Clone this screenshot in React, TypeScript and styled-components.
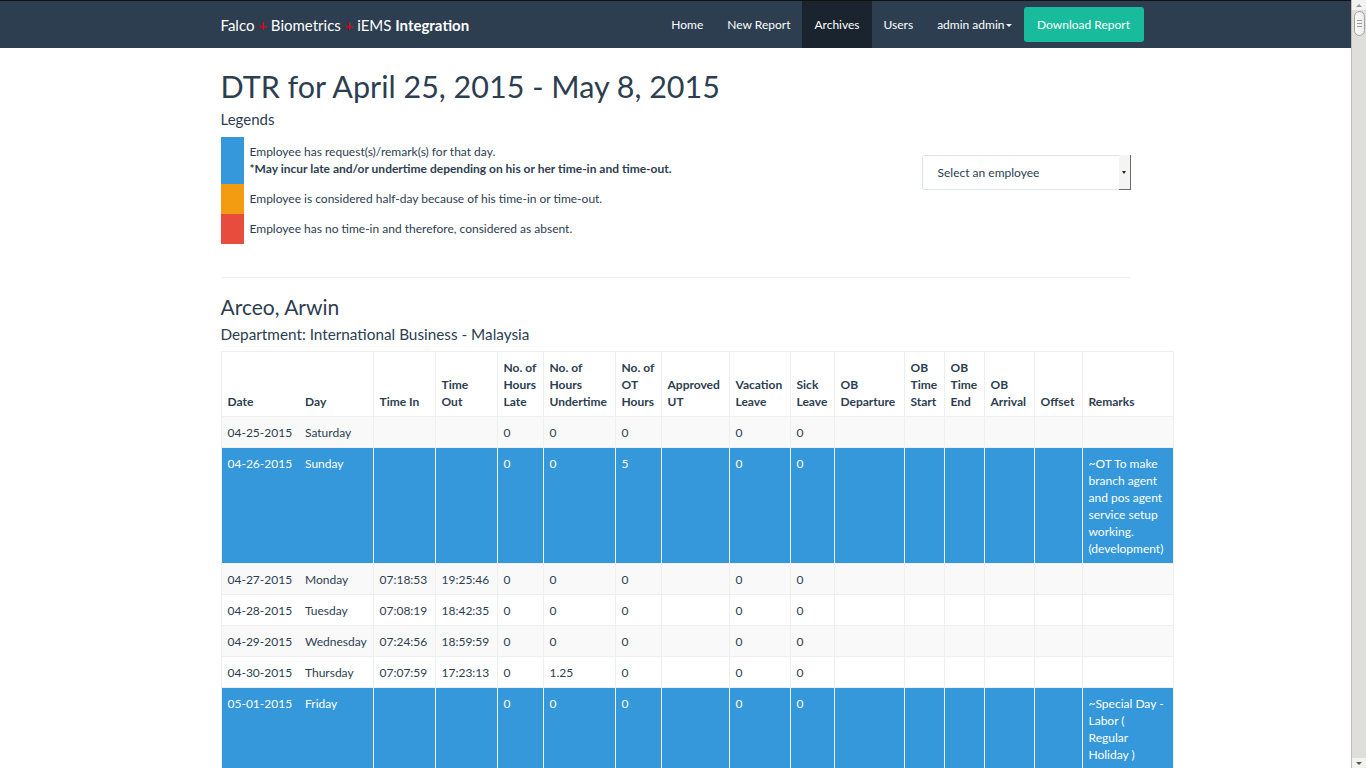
import React from "react";
import styled, { createGlobalStyle } from "styled-components";

const GlobalStyle = createGlobalStyle`
	body {
		margin: 0;
		padding-right: 15px;
		font-family: "Lato", "Liberation Sans", sans-serif;
		font-size: 12px;
		color: #2c3e50;
		background: #fff;
	}
`;

/* window scrollbar as it shows in the screenshot */
const ScrollBar = styled.div`
	position: fixed;
	top: 0;
	right: 0;
	width: 15px;
	height: 100vh;
	display: flex;
	flex-direction: column;
	align-items: center;
	box-sizing: border-box;
	background: #dfdedb;
	border-left: 1px solid #bdbcb9;
`;

const ScrollButton = styled.div<{ $down?: boolean }>`
	height: 10px;
	width: 100%;
	display: flex;
	align-items: center;
	justify-content: center;
	margin-top: ${(p) => (p.$down ? "auto" : "0")};
	background: #f2f2f1;

	&::after {
		content: "";
		border-left: 3px solid transparent;
		border-right: 3px solid transparent;
		${(p) => (p.$down ? "border-top: 3px solid #555;" : "border-bottom: 3px solid #999;")}
	}
`;

const ScrollThumb = styled.div`
	width: 11px;
	height: 25px;
	margin-top: 1px;
	box-sizing: border-box;
	border: 1px solid #a3a3a1;
	border-radius: 6px;
	background: linear-gradient(to right, #fbfbfa, #ececea);
	display: flex;
	flex-direction: column;
	align-items: center;
	justify-content: center;
	gap: 2px;

	span {
		width: 5px;
		height: 1px;
		background: #9b9b99;
	}
`;

const Navbar = styled.nav`
	background: #2c3e50;
	border-top: 1px solid #111;
	height: 47px;
`;

const Container = styled.div`
	width: 940px;
	margin: 0 auto;
	padding: 0 15px;
	box-sizing: border-box;
`;

const NavInner = styled(Container)`
	display: flex;
	align-items: center;
	justify-content: space-between;
	height: 100%;
`;

const Brand = styled.a`
	color: #fff;
	font-size: 15px;
	text-decoration: none;
	white-space: nowrap;

	b {
		font-weight: 700;
	}
`;

const Plus = styled.span`
	color: #e3000f;
`;

const NavList = styled.ul`
	display: flex;
	align-items: center;
	height: 100%;
	margin: 0 -13px 0 0;
	padding: 0;
	list-style: none;
`;

const NavItem = styled.li<{ $active?: boolean }>`
	height: 100%;
	display: flex;
	align-items: center;
	padding: 0 12px;
	color: #fff;
	font-size: 12px;
	background: ${(p) => (p.$active ? "#1a242f" : "transparent")};
	cursor: pointer;
`;

const Caret = styled.span`
	display: inline-block;
	width: 0;
	height: 0;
	margin-left: 1px;
	margin-top: 2px;
	border-top: 3px solid #fff;
	border-left: 3px solid transparent;
	border-right: 3px solid transparent;
`;

const DownloadButton = styled.button`
	height: 35px;
	width: 120px;
	padding: 0;
	border: none;
	border-radius: 3px;
	background: #18bc9c;
	color: #fff;
	font-family: inherit;
	font-size: 12px;
	cursor: pointer;
`;

const Title = styled.h1`
	font-size: 30.5px;
	font-weight: 400;
	line-height: 1.1;
	margin: 22px 0 7px;
`;

const SubTitle = styled.h4`
	font-size: 15px;
	font-weight: 400;
	margin: 0 0 10px;
	line-height: 1.1;
`;

const LegendRow = styled.div`
	display: flex;
	justify-content: space-between;
	align-items: flex-start;
`;

const LegendList = styled.div`
	display: flex;
	flex-direction: column;
`;

const LegendItem = styled.div`
	display: flex;
`;

const Swatch = styled.div<{ $color: string }>`
	width: 23px;
	flex: none;
	background: ${(p) => p.$color};
`;

const LegendText = styled.div`
	padding: 6px 6px 7px;
	line-height: 17px;

	strong {
		font-weight: 700;
	}
`;

const Select = styled.div`
	display: flex;
	width: 209px;
	height: 35px;
	margin-top: 18px;
	box-sizing: border-box;
	border: 1px solid #dce4ec;
	border-radius: 3px;
	background: #fff;
`;

const SelectLabel = styled.div`
	flex: 1;
	display: flex;
	align-items: center;
	padding-left: 15px;
`;

const SelectArrow = styled.div`
	width: 11px;
	display: flex;
	align-items: center;
	justify-content: center;
	background: #f4f4f3;
	border-right: 1px solid #6b6b6b;
	border-bottom: 1px solid #6b6b6b;
	margin: -1px -1px -1px 0;

	&::after {
		content: "";
		border-top: 3px solid #222;
		border-left: 2.5px solid transparent;
		border-right: 2.5px solid transparent;
	}
`;

const Divider = styled.hr`
	border: none;
	border-top: 1px solid #ecf0f1;
	margin: 33px 0 17px;
`;

const EmployeeName = styled.h3`
	font-size: 21px;
	font-weight: 400;
	line-height: 1.1;
	margin: 0 0 8px;
`;

const Department = styled.h4`
	font-size: 15.3px;
	font-weight: 400;
	line-height: 1.1;
	margin: 0 0 8px;
`;

const Table = styled.table`
	width: 952px;
	table-layout: fixed;
	border-collapse: collapse;
	border: 1px solid #ecf0f1;
`;

const Th = styled.th<{ $joined?: boolean }>`
	text-align: left;
	vertical-align: bottom;
	font-weight: 700;
	line-height: 17px;
	padding: 7px 5px 6px 6px;
	border: 1px solid #ecf0f1;
	${(p) => p.$joined && "border-right: hidden;"}
`;

const Tr = styled.tr<{ $flag?: boolean }>`
	background: ${(p) => (p.$flag ? "#3498db" : "#fff")};
	color: ${(p) => (p.$flag ? "#fff" : "inherit")};

	&:nth-child(odd) {
		background: ${(p) => (p.$flag ? "#3498db" : "#f9f9f9")};
	}
`;

const Td = styled.td<{ $joined?: boolean }>`
	vertical-align: top;
	line-height: 17px;
	padding: 7px 5px 6px 6px;
	border: 1px solid #ecf0f1;
	${(p) => p.$joined && "border-right: hidden;"}
`;

const RemarksTd = styled(Td)`
	padding-right: 7px;
`;

const widths = [78, 74, 62, 62, 46, 72, 46, 68, 61, 44, 70, 40, 40, 50, 48, 91];

const headers: React.ReactNode[] = [
	"Date",
	"Day",
	"Time In",
	<>Time<br />Out</>,
	<>No. of<br />Hours<br />Late</>,
	<>No. of<br />Hours<br />Undertime</>,
	<>No. of<br />OT<br />Hours</>,
	<>Approved<br />UT</>,
	<>Vacation<br />Leave</>,
	<>Sick<br />Leave</>,
	<>OB<br />Departure</>,
	<>OB<br />Time<br />Start</>,
	<>OB<br />Time<br />End</>,
	<>OB<br />Arrival</>,
	"Offset",
	"Remarks",
];

type Row = {
	date: string;
	day: string;
	timeIn?: string;
	timeOut?: string;
	late: string;
	undertime: string;
	ot: string;
	remarks?: string;
	flag?: boolean;
};

const rows: Row[] = [
	{ date: "04-25-2015", day: "Saturday", late: "0", undertime: "0", ot: "0" },
	{
		date: "04-26-2015",
		day: "Sunday",
		late: "0",
		undertime: "0",
		ot: "5",
		remarks: "~OT To make branch agent and pos agent service setup working. (development)",
		flag: true,
	},
	{ date: "04-27-2015", day: "Monday", timeIn: "07:18:53", timeOut: "19:25:46", late: "0", undertime: "0", ot: "0" },
	{ date: "04-28-2015", day: "Tuesday", timeIn: "07:08:19", timeOut: "18:42:35", late: "0", undertime: "0", ot: "0" },
	{ date: "04-29-2015", day: "Wednesday", timeIn: "07:24:56", timeOut: "18:59:59", late: "0", undertime: "0", ot: "0" },
	{ date: "04-30-2015", day: "Thursday", timeIn: "07:07:59", timeOut: "17:23:13", late: "0", undertime: "1.25", ot: "0" },
	{
		date: "05-01-2015",
		day: "Friday",
		late: "0",
		undertime: "0",
		ot: "0",
		remarks: "~Special Day - Labor ( Regular Holiday )",
		flag: true,
	},
	{ date: "05-02-2015", day: "Saturday", late: "0", undertime: "0", ot: "0" },
	{ date: "05-03-2015", day: "Sunday", late: "0", undertime: "0", ot: "0" },
	{ date: "05-04-2015", day: "Monday", timeIn: "07:12:40", timeOut: "18:31:02", late: "0", undertime: "0", ot: "0" },
	{ date: "05-05-2015", day: "Tuesday", timeIn: "07:20:11", timeOut: "18:05:37", late: "0", undertime: "0", ot: "0" },
	{ date: "05-06-2015", day: "Wednesday", timeIn: "07:09:45", timeOut: "19:02:18", late: "0", undertime: "0", ot: "0" },
	{ date: "05-07-2015", day: "Thursday", timeIn: "07:15:26", timeOut: "18:47:50", late: "0", undertime: "0", ot: "0" },
	{ date: "05-08-2015", day: "Friday", timeIn: "07:04:33", timeOut: "17:58:09", late: "0", undertime: "0", ot: "0" },
];

const Page = styled.main`
	padding-bottom: 40px;
`;

const App: React.FC = () => {
	return (
		<>
			<GlobalStyle />
			<Navbar>
				<NavInner>
					<Brand>
						Falco <Plus>+</Plus> Biometrics <Plus>+</Plus> iEMS <b>Integration</b>
					</Brand>
					<NavList>
						<NavItem>Home</NavItem>
						<NavItem>New Report</NavItem>
						<NavItem $active>Archives</NavItem>
						<NavItem>Users</NavItem>
						<NavItem>
							admin admin
							<Caret />
						</NavItem>
						<DownloadButton>Download Report</DownloadButton>
					</NavList>
				</NavInner>
			</Navbar>
			<Page>
				<Container>
					<Title>DTR for April 25, 2015 - May 8, 2015</Title>
					<SubTitle>Legends</SubTitle>
					<LegendRow>
						<LegendList>
							<LegendItem>
								<Swatch $color="#3498db" />
								<LegendText>
									Employee has request(s)/remark(s) for that day.
									<br />
									<strong>*May incur late and/or undertime depending on his or her time-in and time-out.</strong>
								</LegendText>
							</LegendItem>
							<LegendItem>
								<Swatch $color="#f39c12" />
								<LegendText>Employee is considered half-day because of his time-in or time-out.</LegendText>
							</LegendItem>
							<LegendItem>
								<Swatch $color="#e74c3c" />
								<LegendText>Employee has no time-in and therefore, considered as absent.</LegendText>
							</LegendItem>
						</LegendList>
						<Select>
							<SelectLabel>Select an employee</SelectLabel>
							<SelectArrow />
						</Select>
					</LegendRow>
					<Divider />
					<EmployeeName>Arceo, Arwin</EmployeeName>
					<Department>Department: International Business - Malaysia</Department>
					<Table>
						<colgroup>
							{widths.map((w, i) => (
								<col key={i} style={{ width: w }} />
							))}
						</colgroup>
						<thead>
							<tr>
								{headers.map((h, i) => (
									<Th key={i} $joined={i === 0}>
										{h}
									</Th>
								))}
							</tr>
						</thead>
						<tbody>
							{rows.map((r) => (
								<Tr key={r.date} $flag={r.flag}>
									<Td $joined>{r.date}</Td>
									<Td>{r.day}</Td>
									<Td>{r.timeIn}</Td>
									<Td>{r.timeOut}</Td>
									<Td>{r.late}</Td>
									<Td>{r.undertime}</Td>
									<Td>{r.ot}</Td>
									<Td />
									<Td>0</Td>
									<Td>0</Td>
									<Td />
									<Td />
									<Td />
									<Td />
									<Td />
									<RemarksTd>{r.remarks}</RemarksTd>
								</Tr>
							))}
						</tbody>
					</Table>
				</Container>
			</Page>
			<ScrollBar>
				<ScrollButton />
				<ScrollThumb>
					<span />
					<span />
					<span />
				</ScrollThumb>
				<ScrollButton $down />
			</ScrollBar>
		</>
	);
};

export default App;
